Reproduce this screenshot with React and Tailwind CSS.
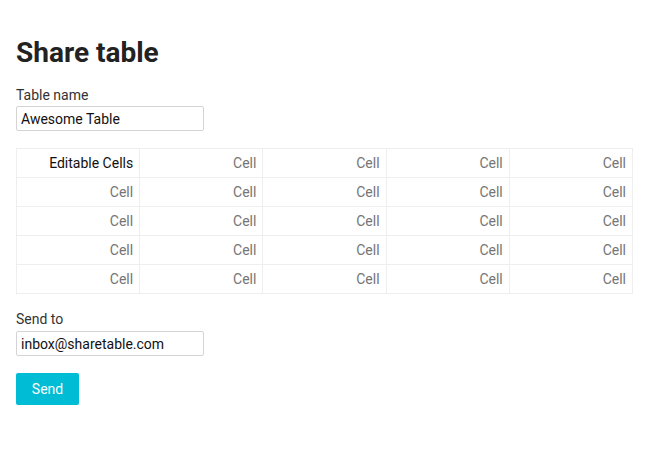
import { useState } from "react";

export default function App() {
  const [name, setName] = useState("Awesome Table");
  const [email, setEmail] = useState("inbox@sharetable.com");

  const rows = [0, 1, 2, 3, 4];
  const cols = [0, 1, 2, 3, 4];

  return (
    <div className="min-h-screen bg-white px-4 pt-[36px] font-['Roboto',sans-serif] text-[#333]">
      {/* Title */}
      <h1 className="text-[28px] font-bold leading-[34px] text-[#222]">Share table</h1>

      {/* Table name */}
      <div className="mt-[17px]">
        <label className="block text-[14px] leading-[17px] text-[#333]">Table name</label>
        <input
          value={name}
          onChange={(e) => setName(e.target.value)}
          className="mt-[2px] block h-[25px] w-[188px] rounded-[2px] border border-[#d4d4d4] px-[4px] text-[14px] text-[#111] outline-none"
        />
      </div>

      {/* Grid */}
      <table className="mt-[17px] w-full table-fixed border-collapse border border-[#eeeeee]">
        <tbody>
          {rows.map((r) => (
            <tr key={r}>
              {cols.map((c) => (
                <td
                  key={c}
                  className={`h-[29px] border border-[#eeeeee] px-[6px] text-right text-[14px] ${
                    r === 0 && c === 0 ? "text-[#111]" : "text-[#757575]"
                  }`}
                >
                  {r === 0 && c === 0 ? "Editable Cells" : "Cell"}
                </td>
              ))}
            </tr>
          ))}
        </tbody>
      </table>

      {/* Send to */}
      <div className="mt-[17px]">
        <label className="block text-[14px] leading-[17px] text-[#333]">Send to</label>
        <input
          value={email}
          onChange={(e) => setEmail(e.target.value)}
          className="mt-[3px] block h-[25px] w-[188px] rounded-[2px] border border-[#d4d4d4] px-[4px] text-[14px] text-[#111] outline-none"
        />
      </div>

      <button className="mt-[17px] h-[32px] w-[63px] rounded-[2px] bg-[#00bcd4] text-[14px] text-white">
        Send
      </button>
    </div>
  );
}
